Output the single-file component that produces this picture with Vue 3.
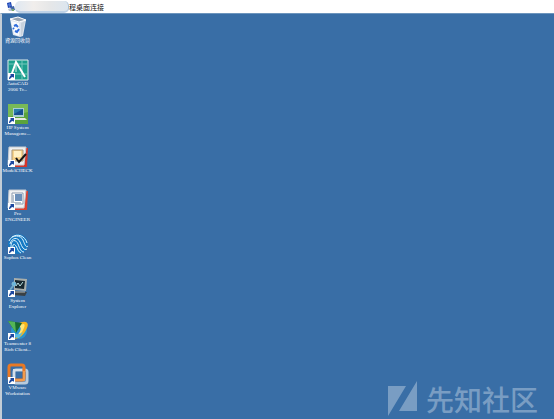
<script setup>
const items = [
  { id: 'bin', lines: ['資源回收筒'] },
  { id: 'cad', lines: ['AutoCAD', '2006 Tr...'], link: true },
  { id: 'hp', lines: ['HP System', 'Manageme...'], link: true },
  { id: 'check', lines: ['ModelCHECK'], link: true },
  { id: 'pro', lines: ['Pro', 'ENGINEER'], link: true },
  { id: 'sophos', lines: ['Sophos Clean'], link: true },
  { id: 'explorer', lines: ['System', 'Explorer'], link: true },
  { id: 'team', lines: ['Teamcenter 8', 'Rich Client...'], link: true },
  { id: 'vm', lines: ['VMware', 'Workstation'], link: true },
]
</script>

<template>
  <div class="window">
    <header class="titlebar">
      <svg class="remote" viewBox="0 0 9 10" aria-hidden="true">
        <path d="M1 1 5 0 6 5 2 6Z" fill="#173fae" />
        <path d="M2 2 4 1 5 4 3 5Z" fill="#4d76d8" />
        <path d="M4 5 8 4 9 8 5 9Z" fill="#4166a8" />
        <path d="M2 7 5 6 6 9 3 9Z" fill="#b9c4cf" />
        <path d="M6 7h2v2H6Z" fill="#79a96b" />
      </svg>
      <span class="mask"></span>
      <h1 class="title">程桌面连接</h1>
    </header>
    <main class="desktop">
      <nav class="icons">
        <button v-for="item in items" :key="item.id" class="item" type="button">
          <svg class="icon" viewBox="0 0 22 22" aria-hidden="true">
            <g v-if="item.id === 'bin'">
              <path d="M3 3 19 4 16 20 13 21 6 19Z" fill="#dce4ee" />
              <path d="M3 3 11 1 19 4 12 6Z" fill="#9aa6b4" stroke="#fff" />
              <path d="M4 5 12 7 12 20 7 18Z" fill="#f8fafc" />
              <path d="M14 7 18 5 15 19 14 20Z" fill="#c8d2dd" />
              <path d="M7 10 9 9 11 11M12 13 10 16 8 15M7 13 6 12" fill="none" stroke="#2f6cdc" stroke-width="2" />
            </g>
            <g v-else-if="item.id === 'cad'">
              <path d="M1 1h20v20H1Z" fill="#1c9f8e" stroke="#dfeceb" />
              <path d="M2 15h18M15 2v18M2 5h5M11 5h9" stroke="#75c8bd" />
              <path d="M4 17 9 3 18 18" fill="none" stroke="#fff" stroke-width="2" />
              <path d="M9 5v8" stroke="#d4f1ea" />
            </g>
            <g v-else-if="item.id === 'hp'">
              <path d="M1 1h20v20H1Z" fill="#5ba33b" />
              <path d="M1 1h20v8L1 14Z" fill="#78b957" />
              <path d="M6 5h11v9H6Z" fill="#a8cbd2" />
              <path d="M7 6h9v6H7Z" fill="#164f91" />
              <path d="M7 6h9L7 11Z" fill="#287baa" />
              <path d="M6 15h12l2 2H5Z" fill="#e5e9dc" />
            </g>
            <g v-else-if="item.id === 'check'">
              <path d="M4 1 21 2 20 21 3 21Z" fill="#d6362a" />
              <path d="M2 1h17l-2 18H1Z" fill="#eef0f1" stroke="#c6cbd2" />
              <path d="M5 4h11v11H5Z" fill="#f8d48c" stroke="#a99575" />
              <path d="M7 5h7v6H7Z" fill="#fff1c5" />
              <path d="m9 12 3 4 7-8" fill="none" stroke="#171717" stroke-width="2" />
            </g>
            <g v-else-if="item.id === 'pro'">
              <path d="M4 1 21 2 20 21 3 21Z" fill="#dc4030" />
              <path d="M2 1h17l-2 18H1Z" fill="#f1f2f3" stroke="#c1c7d0" />
              <path d="M5 4h11v11H5Z" fill="#fff" stroke="#8a9aae" />
              <path d="M8 5h7v7H8Z" fill="#6b90ba" />
              <path d="M6 6v8h8" fill="none" stroke="#b4c0cd" stroke-width="2" />
            </g>
            <g v-else-if="item.id === 'sophos'">
              <circle cx="11" cy="11" r="10" fill="#1479c4" />
              <g fill="none" stroke="#e0f4fc">
                <path d="M2 8C5 1 14 2 16 7s3 8 5 6M3 11C5 4 11 4 13 9s4 9 7 7M4 14c0-8 5-8 7-3s3 8 6 8M6 17c-1-6 1-7 3-4s2 6 5 7" />
                <path d="M5 4c6-4 13-1 15 6" />
              </g>
            </g>
            <g v-else-if="item.id === 'explorer'">
              <path d="M7 2 20 3 19 15 7 14Z" fill="#a9aeaa" />
              <path d="M8 4 18 5 17 13 8 12Z" fill="#17272f" />
              <path d="m9 10 2-3 2 3 3-4" fill="none" stroke="#bce3e2" />
              <path d="M7 15 20 16 18 20 6 19Z" fill="#3a4145" />
              <path d="M8 16h10" stroke="#b5b8b5" />
              <circle cx="7" cy="8" r="2" fill="#66b8df" stroke="#84bdd6" />
              <path d="m6 10-3 4" stroke="#6fa9c7" stroke-width="2" />
            </g>
            <g v-else-if="item.id === 'team'">
              <circle cx="12" cy="12" r="8" fill="#2a93cf" />
              <path d="M10 5C17 1 23 2 20 9S12 20 7 20c7-5 11-11 9-13-1-2-4 0-6 1Z" fill="#f7b51d" />
              <path d="M12 7c4-3 7-3 5 2s-5 8-8 9c5-6 6-9 3-11Z" fill="#ffe675" />
              <path d="M1 2 15 4 9 14Z" fill="#176a32" />
              <path d="m1 2 7 1 1 11Z" fill="#54b557" />
              <path d="M6 13c3 3 6 3 10 0l-4 6-6-1Z" fill="#56bde5" />
            </g>
            <g v-else>
              <rect x="7" y="7" width="13" height="13" rx="2" fill="none" stroke="#b9cbdc" stroke-width="3" />
              <rect x="2" y="2" width="15" height="15" rx="2" fill="none" stroke="#e87925" stroke-width="3" />
              <path d="M7 15V7h8" fill="none" stroke="#d4dee8" stroke-width="2" />
              <path d="M8 17h9V8" fill="none" stroke="#f29b4c" stroke-width="2" />
            </g>
            <g v-if="item.link">
              <path d="M1 14h7v7H1Z" fill="#fff" />
              <path d="M2 20c0-2 1-3 2-4l-1-1h4v4l-1-1c-2 0-2 1-3 2Z" fill="#1d49a0" />
            </g>
          </svg>
          <span class="label">
            <span v-for="line in item.lines" :key="line" class="line">{{ line }}</span>
          </span>
        </button>
      </nav>
      <div class="watermark">
        <svg class="mark" viewBox="0 0 30 35" aria-hidden="true">
          <path d="M0 5H18L0 35ZM29 0V30H11Z" fill="currentColor" />
        </svg>
        <span>先知社区</span>
      </div>
    </main>
  </div>
</template>

<style>
body {
  margin: 0;
}
</style>

<style scoped>
.window {
  display: flex;
  flex-direction: column;
  min-height: 100vh;
  background: #fff;
}
.titlebar {
  display: flex;
  align-items: center;
  height: 13px;
  padding-left: 6px;
}
.remote {
  width: 9px;
  height: 10px;
}
.mask {
  width: 54px;
  height: 12px;
  box-sizing: border-box;
  border-radius: 5px;
  border-bottom: 2px solid #bdd1e6;
  border-right: 1px solid #a9bfd6;
  background: linear-gradient(90deg, #dfe8f2, #f1eeec 35%, #e6e7e8 65%, #dce6ef);
}
.title {
  margin: 0;
  font: 400 7px/12px "Noto Sans CJK SC", sans-serif;
  color: #111;
}
.desktop {
  flex: 1;
  display: flex;
  justify-content: space-between;
  border-left: 2px solid #c3cdd6;
  border-top: 1px solid #6d95bd;
  background: #396ea6;
}
.icons {
  display: grid;
  grid-template-rows: repeat(9, 1fr);
  padding: 2px 0 13px;
}
.item {
  display: flex;
  flex-direction: column;
  align-items: center;
  width: 31px;
  height: 34px;
  padding: 0;
  border: 0;
  background: none;
  color: #fff;
}
.icon {
  flex: none;
  width: 22px;
  height: 22px;
}
.label {
  font: 400 5px/6px "Liberation Serif", "Noto Sans CJK TC", serif;
  text-align: center;
  white-space: nowrap;
}
.line {
  display: block;
}
.watermark {
  align-self: flex-end;
  display: flex;
  align-items: center;
  gap: 8px;
  padding: 0 16px 3px 0;
  font: 500 28px/32px "Noto Sans CJK SC", sans-serif;
  color: #799dc3;
}
.mark {
  width: 30px;
  height: 35px;
}
</style>
